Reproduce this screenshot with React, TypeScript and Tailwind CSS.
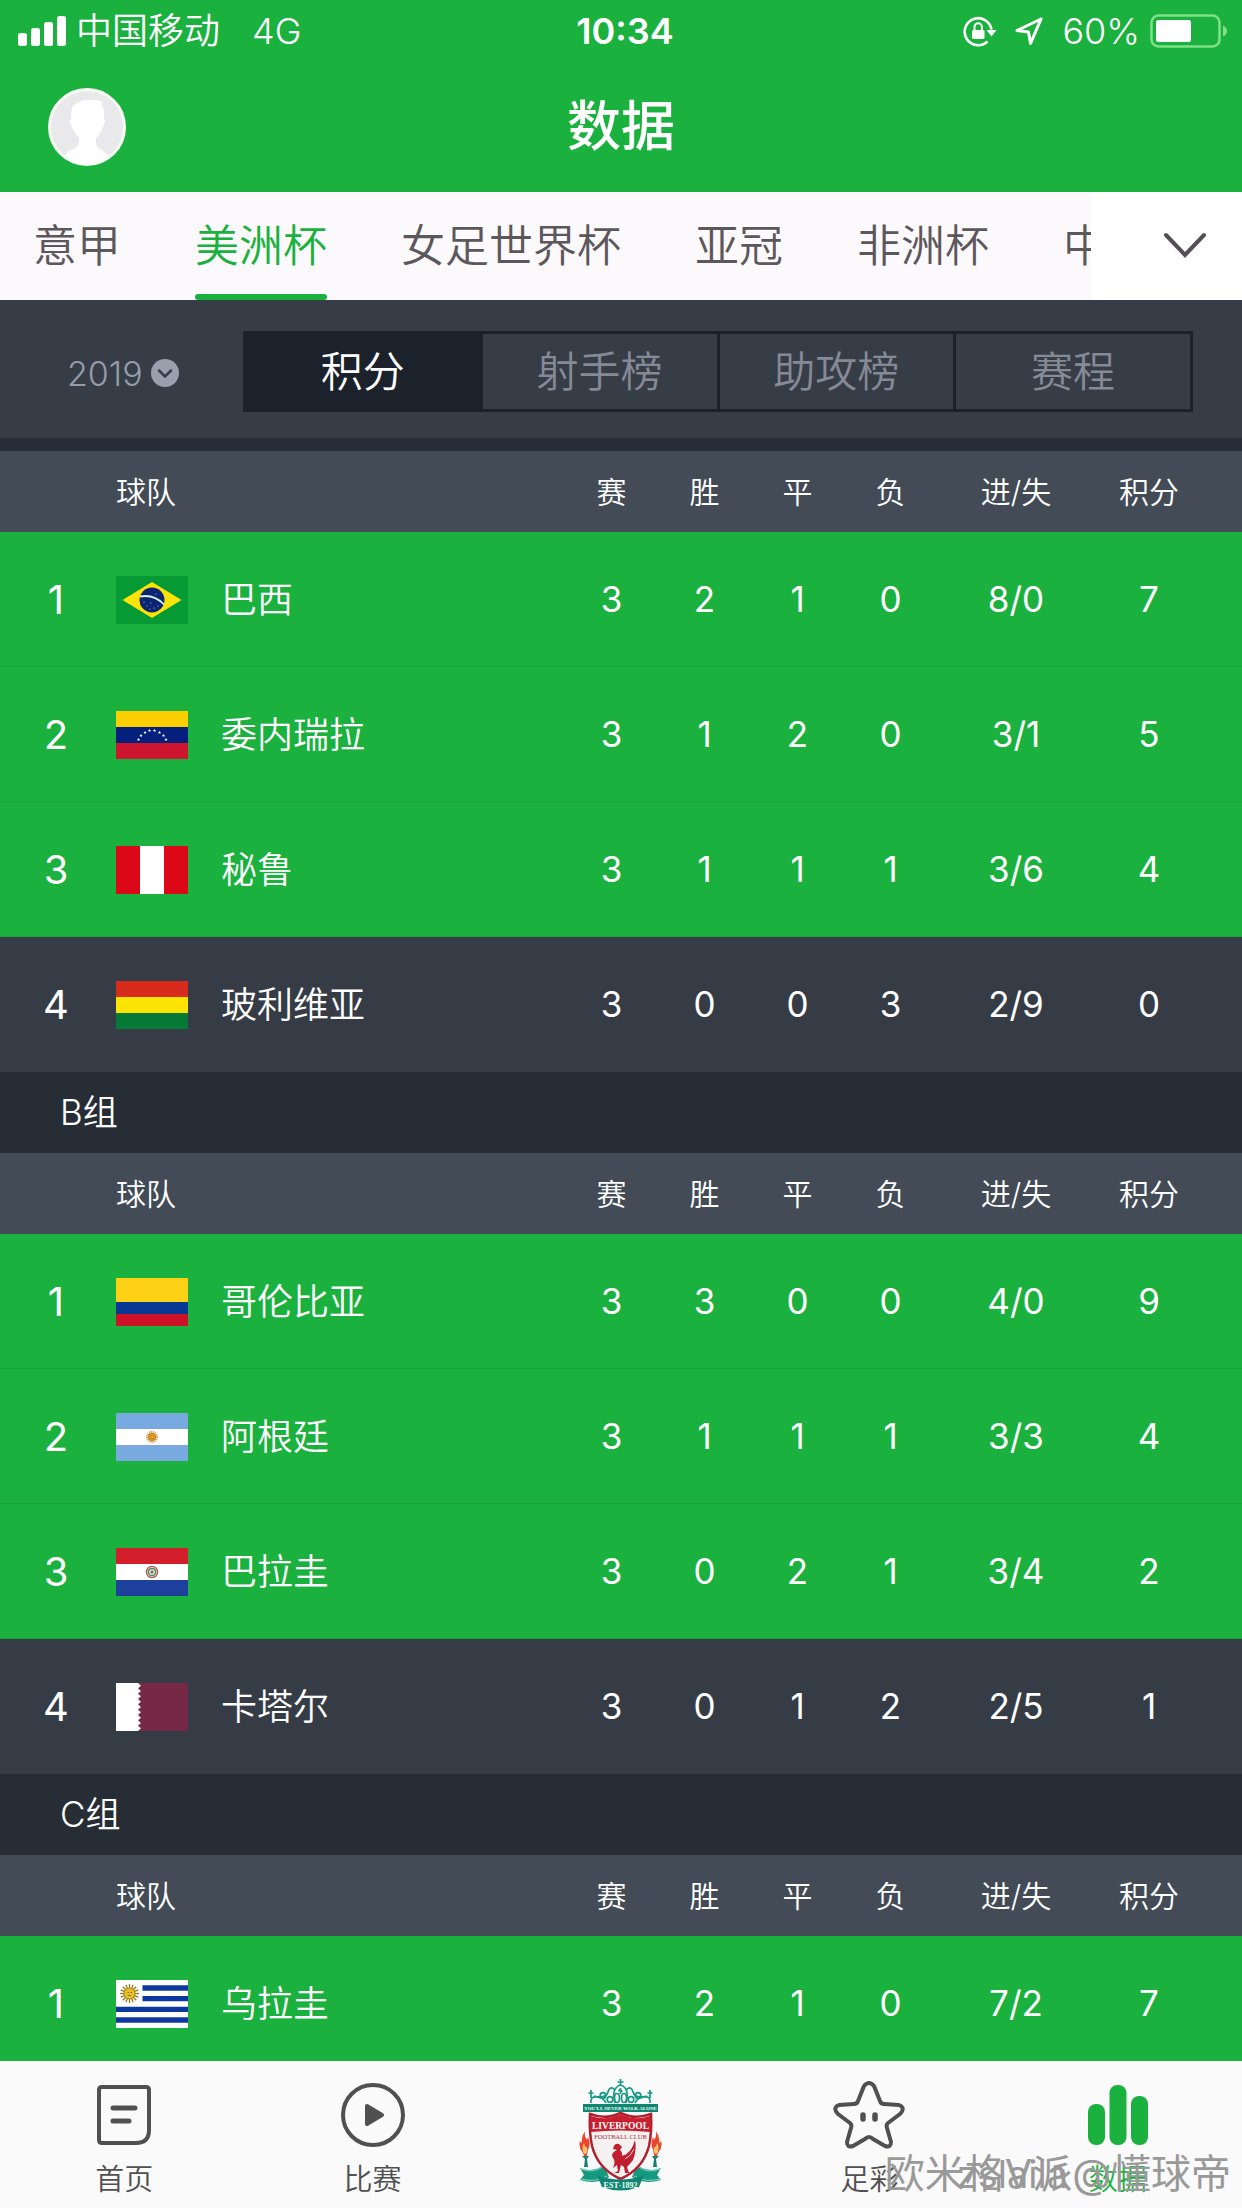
import React from "react";

type Team = {
  rank: number;
  name: string;
  flag: React.ReactNode;
  stats: [string, string, string, string, string, string];
  qualified: boolean;
};

const FONT = "font-['Inter','Noto_Sans_CJK_SC',sans-serif]";

function Flag({ label, children }: { label: string; children: React.ReactNode }) {
  return (
    <svg role="img" aria-label={label} viewBox="0 0 72 48" className="block h-12 w-[72px]">
      {children}
    </svg>
  );
}

function Stripes({ rows }: { rows: [string, number, number][] }) {
  return (
    <>
      {rows.map(([fill, y, h]) => (
        <rect key={y} x="0" y={y} width="72" height={h} fill={fill} />
      ))}
    </>
  );
}

const star = "0,-1.7 0.5,-0.5 1.7,-0.5 0.7,0.3 1,1.5 0,0.8 -1,1.5 -0.7,0.3 -1.7,-0.5 -0.5,-0.5";

const brazil = (
  <Flag label="巴西">
    <rect width="72" height="48" fill="#069a35" />
    <path d="M6.500 24 36 6 65.500 24 36 42Z" fill="#fbe30a" />
    <circle cx="36" cy="24" r="12.500" fill="#0a2573" />
    <path d="M24 20.500Q38 18 48 28.500" fill="none" stroke="#dff0ea" strokeWidth="1.800" />
    <g fill="#c8d4ee">
      <circle cx="28" cy="26" r=".6" />
      <circle cx="31" cy="30" r=".6" />
      <circle cx="35" cy="27" r=".6" />
      <circle cx="38" cy="32" r=".6" />
      <circle cx="42" cy="30" r=".6" />
      <circle cx="34" cy="33" r=".6" />
      <circle cx="40" cy="18" r=".6" />
    </g>
  </Flag>
);

const venezuela = (
  <Flag label="委内瑞拉">
    <Stripes rows={[["#fdce00", 0, 16], ["#04207c", 16, 16], ["#ce1530", 32, 16]]} />
    <g fill="#fff">
      {[
        [22.5, 28.500],
        [25, 24.500],
        [29, 21.500],
        [33.5, 19.500],
        [38.5, 19.500],
        [43.5, 21.500],
        [47.5, 24.500],
        [50, 28.500],
      ].map(([x, y]) => (
        <polygon key={x} points={star} transform={`translate(${x} ${y})`} />
      ))}
    </g>
  </Flag>
);

const peru = (
  <Flag label="秘鲁">
    <rect width="72" height="48" fill="#dc0717" />
    <rect x="24" width="24" height="48" fill="#fff" />
  </Flag>
);

const bolivia = (
  <Flag label="玻利维亚">
    <Stripes rows={[["#d72b1e", 0, 16], ["#fbe404", 16, 16], ["#047a36", 32, 16]]} />
  </Flag>
);

const colombia = (
  <Flag label="哥伦比亚">
    <Stripes rows={[["#fcd116", 0, 24], ["#063894", 24, 12], ["#cd1126", 36, 12]]} />
  </Flag>
);

const argentina = (
  <Flag label="阿根廷">
    <Stripes rows={[["#78aae0", 0, 16], ["#fff", 16, 16], ["#78aae0", 32, 16]]} />
    <circle cx="36" cy="24" r="5" fill="none" stroke="#dfa24a" strokeWidth="2" strokeDasharray="1.200 .8" />
    <circle cx="36" cy="24" r="3.600" fill="#e8a520" stroke="#9c5a18" strokeWidth=".8" />
    <path d="M34.500 23h1M37 23h1M35 25.500h2" stroke="#8a5415" strokeWidth=".7" />
  </Flag>
);

const paraguay = (
  <Flag label="巴拉圭">
    <Stripes rows={[["#d31e2b", 0, 16], ["#fff", 16, 16], ["#1d409c", 32, 16]]} />
    <circle cx="36" cy="24" r="5.600" fill="#f3e6e0" stroke="#a5544a" strokeWidth="1.200" />
    <circle cx="36" cy="24" r="3.600" fill="none" stroke="#4f8a5b" strokeWidth="1.500" />
    <circle cx="36" cy="24" r="1.500" fill="#6d6a78" />
  </Flag>
);

const qatar = (
  <Flag label="卡塔尔">
    <rect width="72" height="48" fill="#762944" />
    <path
      d="M0 0H22L25 2.700 22 5.300 25 8 22 10.700 25 13.300 22 16 25 18.700 22 21.300 25 24 22 26.700 25 29.300 22 32 25 34.700 22 37.300 25 40 22 42.700 25 45.300 22 48H0Z"
      fill="#fff"
    />
  </Flag>
);

const uruguay = (
  <Flag label="乌拉圭">
    <rect width="72" height="48" fill="#fff" />
    <path d="M26.500 5.300H72V10.700H26.500ZM26.500 16H72V21.300H26.500ZM0 26.700H72V32H0ZM0 37.300H72V42.700H0Z" fill="#0d38a0" />
    <g stroke="#8f7418" strokeWidth="1.200">
      {[0, 22.5, 45, 67.5, 90, 112.5, 135, 157.5].map((a) => (
        <path key={a} d="M13.500 4V23" transform={`rotate(${a} 13.500 13.500)`} />
      ))}
    </g>
    <circle cx="13.500" cy="13.500" r="5.500" fill="#e9bf22" stroke="#a88418" strokeWidth="1" />
    <path d="M11.500 12.500h1.500M14.500 12.500H16M12 15.500h3" stroke="#7a5e10" strokeWidth=".8" />
  </Flag>
);

const groups: { id: string; title?: string; teams: Team[] }[] = [
  {
    id: "a",
    teams: [
      { rank: 1, name: "巴西", flag: brazil, stats: ["3", "2", "1", "0", "8/0", "7"], qualified: true },
      { rank: 2, name: "委内瑞拉", flag: venezuela, stats: ["3", "1", "2", "0", "3/1", "5"], qualified: true },
      { rank: 3, name: "秘鲁", flag: peru, stats: ["3", "1", "1", "1", "3/6", "4"], qualified: true },
      { rank: 4, name: "玻利维亚", flag: bolivia, stats: ["3", "0", "0", "3", "2/9", "0"], qualified: false },
    ],
  },
  {
    id: "b",
    title: "B组",
    teams: [
      { rank: 1, name: "哥伦比亚", flag: colombia, stats: ["3", "3", "0", "0", "4/0", "9"], qualified: true },
      { rank: 2, name: "阿根廷", flag: argentina, stats: ["3", "1", "1", "1", "3/3", "4"], qualified: true },
      { rank: 3, name: "巴拉圭", flag: paraguay, stats: ["3", "0", "2", "1", "3/4", "2"], qualified: true },
      { rank: 4, name: "卡塔尔", flag: qatar, stats: ["3", "0", "1", "2", "2/5", "1"], qualified: false },
    ],
  },
  {
    id: "c",
    title: "C组",
    teams: [{ rank: 1, name: "乌拉圭", flag: uruguay, stats: ["3", "2", "1", "0", "7/2", "7"], qualified: true }],
  },
];

function StatusBar() {
  return (
    <div className="grid h-[62px] grid-cols-[1fr_auto_1fr] items-center px-[14px] text-4xl">
      <div className="flex items-center gap-[10px] pl-1">
        <svg viewBox="0 0 48 30" className="h-[30px] w-12 fill-white" aria-label="信号">
          <rect x="0" y="17" width="9" height="13" rx="2.500" />
          <rect x="13" y="12" width="9" height="18" rx="2.500" />
          <rect x="26" y="6" width="9" height="24" rx="2.500" />
          <rect x="39" y="0" width="9" height="30" rx="2.500" />
        </svg>
        <span>中国移动</span>
        <span className="ml-[22px]">4G</span>
      </div>
      <div className="pl-2 text-center font-semibold">10:34</div>
      <div className="flex items-center justify-end">
        <svg viewBox="0 0 36 32" className="h-8 w-9" fill="none" aria-label="方向锁定">
          <path d="M25.500 26.500A13.500 13.500 0 1 1 29.500 14.500" stroke="#fff" strokeWidth="2.600" />
          <path d="M24.500 15H34.500L29.500 21.500Z" fill="#fff" />
          <rect x="10" y="15" width="12.500" height="9" rx="1.500" fill="#fff" />
          <path d="M12.500 15V12a3.700 3.700 0 0 1 7.400 0v3" stroke="#fff" strokeWidth="2" />
        </svg>
        <svg viewBox="0 0 30 30" className="ml-4 size-[30px]" fill="none" aria-label="定位">
          <path d="M27 3 3 14.500 14.500 16 16.500 27.500Z" stroke="#fff" strokeWidth="3" strokeLinejoin="round" />
        </svg>
        <span className="ml-[18px]">60%</span>
        <svg viewBox="0 0 78 34" className="ml-[10px] h-[34px] w-[78px]" aria-label="电池">
          <rect x="1.500" y="1.500" width="68" height="31" rx="7" fill="none" stroke="#7fe088" strokeWidth="2.500" />
          <rect x="6" y="6" width="35" height="22" rx="2.500" fill="#fff" />
          <path d="M73 11.500q4 1.500 4 5.500t-4 5.500Z" fill="#7fe088" />
        </svg>
      </div>
    </div>
  );
}

function TitleBar() {
  return (
    <div className="grid h-[130px] grid-cols-[1fr_auto_1fr] items-center px-12">
      <button type="button" aria-label="个人中心" className="size-[78px] rounded-full">
        <svg viewBox="0 0 78 78" className="size-full">
          <circle cx="39" cy="39" r="37.500" fill="#e9e9eb" stroke="#f6fff4" strokeWidth="3" />
          <path
            d="M30 15q2-3 9-3 8-1 16 2-2 2 0 5 2 4 1 12 2 2 0 5l-2 5q-2 6-6 9-1 9 4 11 5 3 10 7-10 8.500-23 8.500T16 68q4-5 10-7 6-3 5-11-4-4-6-9l-3-6q-1-3 1-4 0-11 2-13 2-3 5-3Z"
            fill="#fff"
          />
        </svg>
      </button>
      <h1 className="text-[54px] leading-[70px] font-medium">数据</h1>
    </div>
  );
}

const leagues = ["意甲", "美洲杯", "女足世界杯", "亚冠", "非洲杯", "中超"];

function LeagueTabs() {
  return (
    <nav aria-label="联赛" className="flex h-[108px] shrink-0 bg-white text-[44px] text-[#5c575b]">
      <div className="flex min-w-0 flex-1 gap-[74px] overflow-hidden bg-[#fbf9fc] pl-[33px]">
        {leagues.map((name) => (
          <button
            key={name}
            type="button"
            aria-current={name === "美洲杯" ? "page" : undefined}
            className={
              name === "美洲杯"
                ? "relative shrink-0 text-[#1ab13e] after:absolute after:inset-x-0 after:bottom-0 after:h-[6px] after:rounded-full after:bg-[#1ab13e]"
                : "shrink-0"
            }
          >
            {name}
          </button>
        ))}
      </div>
      <button type="button" aria-label="更多联赛" className="flex w-[151px] items-center justify-center pl-9">
        <svg viewBox="0 0 44 28" className="h-7 w-11" fill="none">
          <path d="M3 3 22 23 41 3" stroke="#555054" strokeWidth="4" strokeLinecap="round" />
        </svg>
      </button>
    </nav>
  );
}

function Filters() {
  return (
    <div className="flex h-[138px] shrink-0 items-center bg-[#363d47] pt-1 pr-[49px] pl-[67px]">
      <button type="button" className="flex w-44 items-center gap-2 pt-1 text-[34px] text-[#969baa]">
        2019
        <svg viewBox="0 0 28 28" className="size-7" fill="none">
          <circle cx="14" cy="14" r="14" fill="#9a9fae" />
          <path d="M8 11.500 14 17.500 20 11.500" stroke="#363d47" strokeWidth="2.500" strokeLinecap="round" />
        </svg>
      </button>
      <div className="grid h-[81px] flex-1 grid-cols-4 gap-[3px] bg-[#1c222b] p-[3px] text-[42px] text-[#858a96]">
        <button type="button" aria-pressed="true" className="text-white">
          积分
        </button>
        <button type="button" className="bg-[#363d47]">射手榜</button>
        <button type="button" className="bg-[#363d47]">助攻榜</button>
        <button type="button" className="bg-[#363d47]">赛程</button>
      </div>
    </div>
  );
}

const columns = ["赛", "胜", "平", "负", "进/失", "积分"];

function GroupTable({ title, teams }: { title?: string; teams: Team[] }) {
  return (
    <table className="w-full table-fixed border-separate border-spacing-0 text-center">
      {title && <caption className="h-[81px] bg-[#272d35] pl-[60px] text-left text-[35px] leading-[81px]">{title}</caption>}
      <colgroup>
        <col className="w-28" />
        <col />
        <col className="w-[93px]" />
        <col className="w-[93px]" />
        <col className="w-[93px]" />
        <col className="w-[93px]" />
        <col className="w-[158px]" />
        <col className="w-[147px]" />
      </colgroup>
      <thead>
        <tr className="h-[81px] bg-[#424b56] text-[30px]">
          <td />
          <th scope="col" className="pt-[2px] pl-1 text-left font-[350]">
            球队
          </th>
          {columns.map((c) => (
            <th key={c} scope="col" className="pt-[2px] font-[350] last:pr-[39px]">
              {c}
            </th>
          ))}
        </tr>
      </thead>
      <tbody>
        {teams.map((t) => (
          <tr
            key={t.rank}
            className={
              t.qualified
                ? "h-[135px] bg-[#1ab13e] text-[35px] shadow-[inset_0_-1px_#17a338]"
                : "h-[135px] bg-[#363c46] text-[35px]"
            }
          >
            <td className="text-[40px] font-normal">{t.rank}</td>
            <th scope="row" className="pl-1 text-left font-[350]">
              <div className="flex items-center gap-[33px] text-4xl">
                {t.flag}
                {t.name}
              </div>
            </th>
            {t.stats.map((s, i) => (
              <td key={i} className="font-normal last:pr-[39px]">
                {s}
              </td>
            ))}
          </tr>
        ))}
      </tbody>
    </table>
  );
}

function HomeIcon() {
  return (
    <svg viewBox="0 0 56 62" className="h-[62px] w-14" fill="none" stroke="#505050" strokeWidth="4">
      <path d="M6 3H50Q53 3 53 6V46Q53 59 40 59H6Q3 59 3 56V6Q3 3 6 3Z" />
      <path d="M17 24H39M17 37H33" strokeWidth="5" strokeLinecap="round" />
    </svg>
  );
}

function PlayIcon() {
  return (
    <svg viewBox="0 0 66 66" className="size-[66px]" fill="none">
      <circle cx="33" cy="33" r="30" stroke="#505050" strokeWidth="4" />
      <path d="M27 24 42 33 27 42Z" fill="#505050" stroke="#505050" strokeWidth="4" strokeLinejoin="round" />
    </svg>
  );
}

function StarIcon() {
  return (
    <svg viewBox="0 0 72 68" className="h-[68px] w-[72px]" fill="none" stroke="#505050">
      <path
        d="M31 5Q36-1 41 5L47 20Q48 23 51 23L66 24Q73 27 67 33L55 42Q53 44 54 47L58 61Q58 67 52 65L40 58Q36 54 32 58L20 65Q14 67 14 61L18 47Q19 44 17 42L5 33Q-1 27 6 24L21 23Q24 23 25 20Z"
        strokeWidth="4"
        strokeLinejoin="round"
      />
      <path d="M30 34V38M42 34V38" strokeWidth="5.500" strokeLinecap="round" />
    </svg>
  );
}

function BarsIcon() {
  return (
    <svg viewBox="0 0 60 60" className="size-[60px] fill-[#1ab13e]">
      <rect x="0" y="19" width="17" height="41" rx="8" />
      <rect x="21.500" y="0" width="17" height="60" rx="8" />
      <rect x="43" y="11" width="17" height="49" rx="8" />
    </svg>
  );
}

function Torch({ flip }: { flip?: boolean }) {
  return (
    <g transform={flip ? "translate(83 0) scale(-1 1)" : undefined}>
      <path d="M5.500 78 4 74Q-1 68 1 62Q2 64 3 64 2 58 6 52Q5 58 8 61L9 58Q12 65 9 71L7.500 78Z" fill="#e8452a" />
      <path d="M5 75Q2 69 5 64Q6 69 8 68 9 72 7 75Z" fill="#f9c26a" />
      <path d="M3 77H10L8 80 9 88H5L6 80Z" fill="#1b7f6f" />
      <path d="M1 89Q14 94 25 86L30 98Q18 106 1 101L5 96Z" fill="#159a80" />
      <path d="M2 90Q14 95 25 87M2 100Q16 104 28 97" fill="none" stroke="#8ed3c1" strokeWidth="1" />
    </g>
  );
}

function Crest() {
  return (
    <svg viewBox="0 0 83 112" role="img" aria-label="Liverpool" className="h-28 w-[83px]">
      <g fill="none" stroke="#169a86" strokeWidth="1.700">
        <path d="M36 24Q32 9 41.500 6 51 9 47 24M12 24Q11 17 18 18T27 24M71 24Q72 17 65 18T56 24M15 17Q27 20 29 13T36 11M68 17Q56 20 54 13T47 11" />
        <circle cx="24" cy="16.500" r="2.800" />
        <circle cx="59" cy="16.500" r="2.800" />
        <circle cx="31" cy="20.500" r="2.800" />
        <circle cx="52" cy="20.500" r="2.800" />
        <ellipse cx="38" cy="19" rx="2.500" ry="4.500" />
        <ellipse cx="45" cy="19" rx="2.500" ry="4.500" />
        <path d="M41.500 0V7M38.500 3H44.500M12 11V19M9.500 14H14.500M71 11V19M68.500 14H73.500" />
        <path d="M41.500 9V15M39.500 12Q42 9 43 13" />
      </g>
      <Torch />
      <Torch flip />
      <path d="M11 35Q27 41 41.500 34 56 41 72 35 73 53 70 67 64 90 41.500 100 19 90 13 67 10 53 11 35Z" fill="#f4f1f1" stroke="#b21f31" strokeWidth="2.500" />
      <path d="M12 37Q27 42 41.500 35.500 56 42 71 37L71 53Q41.500 50 12 53Z" fill="#c9202f" />
      <rect x="4" y="25" width="75" height="8" fill="#108672" />
      <text x="41.500" y="31.200" textAnchor="middle" fontFamily="Liberation Serif, serif" fontSize="5" fontWeight="700" fill="#f3fffa">
        YOU'LL NEVER WALK ALONE
      </text>
      <text x="41.500" y="49.500" textAnchor="middle" fontFamily="Liberation Serif, serif" fontSize="9.500" fontWeight="700" fill="#fff">
        LIVERPOOL
      </text>
      <text x="41.500" y="59.500" textAnchor="middle" fontFamily="Liberation Serif, serif" fontSize="6.500" fill="#ad2838">
        FOOTBALL CLUB
      </text>
      <path
        d="M34 70Q35 64 40 65L43 68 41 71Q44 74 43 77 52 74 56 61 58 71 54 81 50 86 48 88L50 94H46L45 88 42 86 40 94H35L39 92 38 86 34 89Q37 82 34 79 31 74 38 71Z"
        fill="#c01f32"
      />
      <path d="M46 76Q53 71 54 65M46 80Q52 77 55 70" stroke="#f4f1f1" strokeWidth=".8" fill="none" />
      <path d="M18 96Q41.500 105 65 96L60 108Q41.500 115 23 108Z" fill="#108672" />
      <text x="41.500" y="109" textAnchor="middle" fontFamily="Liberation Serif, serif" fontSize="8" fontWeight="700" fill="#eafff7">
        EST·1892
      </text>
    </svg>
  );
}

function BottomNav() {
  const item = "flex flex-col items-center";
  const icon = "mt-[20px] flex h-[68px] items-center justify-center";
  const label = "mt-[10px] text-[29px] leading-[42px]";
  return (
    <nav aria-label="主导航" className="relative grid h-[147px] shrink-0 grid-cols-5 bg-[#fafafa] text-[#505050]">
      <button type="button" className={item}>
        <span className={icon}><HomeIcon /></span>
        <span className={label}>首页</span>
      </button>
      <button type="button" className={item}>
        <span className={icon}><PlayIcon /></span>
        <span className={label}>比赛</span>
      </button>
      <button type="button" className="flex items-start justify-center pt-[18px]">
        <Crest />
      </button>
      <button type="button" className={item}>
        <span className={icon}><StarIcon /></span>
        <span className={label}>足彩</span>
      </button>
      <button type="button" aria-current="page" className="flex flex-col items-center text-[#1ab13e]">
        <span className={icon}><BarsIcon /></span>
        <span className={label}>数据</span>
      </button>
      <span className="pointer-events-none absolute right-[174px] bottom-[10px] text-[38px] leading-[48px] font-normal text-[#999]">zslaila</span>
      <span className="pointer-events-none absolute right-[11px] bottom-[6px] text-[40px] leading-[56px] font-normal text-[#999]">欧米格V派@懂球帝</span>
    </nav>
  );
}

export default function App() {
  return (
    <div className={`flex h-screen flex-col overflow-hidden font-[350] text-white ${FONT}`}>
      <header className="shrink-0 bg-[#1ab13e]">
        <StatusBar />
        <TitleBar />
      </header>
      <LeagueTabs />
      <Filters />
      <main className="min-h-0 flex-1 overflow-y-auto bg-[#272d38] pt-[13px] [scrollbar-width:none]">
        {groups.map((g) => (
          <GroupTable key={g.id} title={g.title} teams={g.teams} />
        ))}
      </main>
      <BottomNav />
    </div>
  );
}
